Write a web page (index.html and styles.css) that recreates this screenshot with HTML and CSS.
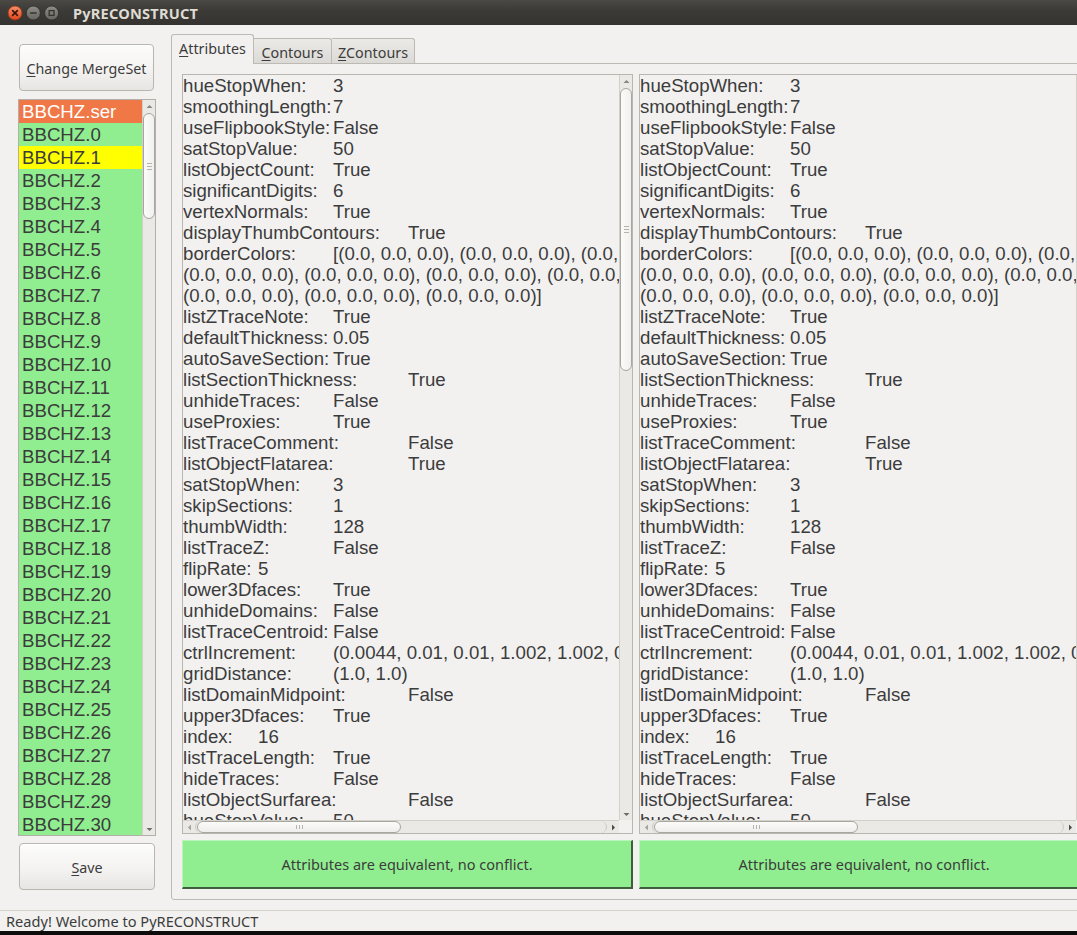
FILE: index.html
```html
<!DOCTYPE html>
<html>
<head>
<meta charset="utf-8">
<title>PyRECONSTRUCT</title>
<link rel="stylesheet" href="styles.css">
</head>
<body>
<div class="window">
  <div class="titlebar">
    <svg class="wbtns" width="64" height="25" viewBox="0 0 64 25">
      <defs>
        <linearGradient id="gc" x1="0" y1="0" x2="0" y2="1">
          <stop offset="0" stop-color="#f7906a"/>
          <stop offset="1" stop-color="#e0461c"/>
        </linearGradient>
        <linearGradient id="gg" x1="0" y1="0" x2="0" y2="1">
          <stop offset="0" stop-color="#8e8d88"/>
          <stop offset="1" stop-color="#67665f"/>
        </linearGradient>
      </defs>
      <circle cx="15" cy="13" r="7" fill="url(#gc)" stroke="#8f3516" stroke-width="0.8"/>
      <path d="M12.6 10.6 L17.4 15.4 M17.4 10.6 L12.6 15.4" stroke="#3a1509" stroke-width="1.6" stroke-linecap="round"/>
      <circle cx="33.3" cy="13" r="7" fill="url(#gg)" stroke="#2f2e2a" stroke-width="0.8"/>
      <path d="M30.6 13 H36" stroke="#35342f" stroke-width="1.6" stroke-linecap="round"/>
      <circle cx="51.6" cy="13" r="7" fill="url(#gg)" stroke="#2f2e2a" stroke-width="0.8"/>
      <rect x="49.2" y="10.6" width="4.8" height="4.8" fill="none" stroke="#35342f" stroke-width="1.3"/>
    </svg>
    <div class="title">PyRECONSTRUCT</div>
  </div>

  <div class="main">
    <div class="side">
      <div class="btn btn-top"><span><u>C</u>hange MergeSet</span></div>
      <div class="list">
        <div class="items">
          <div class="it sel">BBCHZ.ser</div>
          <div class="it g">BBCHZ.0</div>
          <div class="it y">BBCHZ.1</div>
          <div class="it g">BBCHZ.2</div>
          <div class="it g">BBCHZ.3</div>
          <div class="it g">BBCHZ.4</div>
          <div class="it g">BBCHZ.5</div>
          <div class="it g">BBCHZ.6</div>
          <div class="it g">BBCHZ.7</div>
          <div class="it g">BBCHZ.8</div>
          <div class="it g">BBCHZ.9</div>
          <div class="it g">BBCHZ.10</div>
          <div class="it g">BBCHZ.11</div>
          <div class="it g">BBCHZ.12</div>
          <div class="it g">BBCHZ.13</div>
          <div class="it g">BBCHZ.14</div>
          <div class="it g">BBCHZ.15</div>
          <div class="it g">BBCHZ.16</div>
          <div class="it g">BBCHZ.17</div>
          <div class="it g">BBCHZ.18</div>
          <div class="it g">BBCHZ.19</div>
          <div class="it g">BBCHZ.20</div>
          <div class="it g">BBCHZ.21</div>
          <div class="it g">BBCHZ.22</div>
          <div class="it g">BBCHZ.23</div>
          <div class="it g">BBCHZ.24</div>
          <div class="it g">BBCHZ.25</div>
          <div class="it g">BBCHZ.26</div>
          <div class="it g">BBCHZ.27</div>
          <div class="it g">BBCHZ.28</div>
          <div class="it g">BBCHZ.29</div>
          <div class="it g">BBCHZ.30</div>
        </div>
        <div class="vscroll">
          <div class="arr"><svg width="7" height="5" viewBox="0 0 7 5"><path d="M0.5 4 L3.5 1 L6.5 4 Z" fill="#8a8680"/></svg></div>
          <div class="track">
            <div class="vhandle list-handle"><span class="vgrip"></span></div>
          </div>
          <div class="arr"><svg width="7" height="5" viewBox="0 0 7 5"><path d="M0.5 1 L3.5 4 L6.5 1 Z" fill="#6e6a64"/></svg></div>
        </div>
      </div>
      <div class="btn btn-save"><span><u>S</u>ave</span></div>
    </div>

    <div class="tabwidget">
      <div class="tabs">
        <div class="tab t1 active"><span><u>A</u>ttributes</span></div>
        <div class="tab t2"><span><u>C</u>ontours</span></div>
        <div class="tab t3"><span><u>Z</u>Contours</span></div>
      </div>
      <div class="pane">
        <div class="col">
          <div class="tbox">
            <div class="content">
              <div class="r"><span class="k">hueStopWhen:</span>3</div>
              <div class="r"><span class="k">smoothingLength:</span>7</div>
              <div class="r"><span class="k">useFlipbookStyle:</span>False</div>
              <div class="r"><span class="k">satStopValue:</span>50</div>
              <div class="r"><span class="k">listObjectCount:</span>True</div>
              <div class="r"><span class="k">significantDigits:</span>6</div>
              <div class="r"><span class="k">vertexNormals:</span>True</div>
              <div class="r"><span class="k w">displayThumbContours:</span>True</div>
              <div class="r"><span class="k">borderColors:</span>[(0.0, 0.0, 0.0), (0.0, 0.0, 0.0), (0.0,</div>
              <div class="r">(0.0, 0.0, 0.0), (0.0, 0.0, 0.0), (0.0, 0.0, 0.0), (0.0, 0.0,</div>
              <div class="r">(0.0, 0.0, 0.0), (0.0, 0.0, 0.0), (0.0, 0.0, 0.0)]</div>
              <div class="r"><span class="k">listZTraceNote:</span>True</div>
              <div class="r"><span class="k">defaultThickness:</span>0.05</div>
              <div class="r"><span class="k">autoSaveSection:</span>True</div>
              <div class="r"><span class="k w">listSectionThickness:</span>True</div>
              <div class="r"><span class="k">unhideTraces:</span>False</div>
              <div class="r"><span class="k">useProxies:</span>True</div>
              <div class="r"><span class="k w">listTraceComment:</span>False</div>
              <div class="r"><span class="k w">listObjectFlatarea:</span>True</div>
              <div class="r"><span class="k">satStopWhen:</span>3</div>
              <div class="r"><span class="k">skipSections:</span>1</div>
              <div class="r"><span class="k">thumbWidth:</span>128</div>
              <div class="r"><span class="k">listTraceZ:</span>False</div>
              <div class="r"><span class="k n">flipRate:</span>5</div>
              <div class="r"><span class="k">lower3Dfaces:</span>True</div>
              <div class="r"><span class="k">unhideDomains:</span>False</div>
              <div class="r"><span class="k">listTraceCentroid:</span>False</div>
              <div class="r"><span class="k">ctrlIncrement:</span>(0.0044, 0.01, 0.01, 1.002, 1.002, 0</div>
              <div class="r"><span class="k">gridDistance:</span>(1.0, 1.0)</div>
              <div class="r"><span class="k w">listDomainMidpoint:</span>False</div>
              <div class="r"><span class="k">upper3Dfaces:</span>True</div>
              <div class="r"><span class="k n">index:</span>16</div>
              <div class="r"><span class="k">listTraceLength:</span>True</div>
              <div class="r"><span class="k">hideTraces:</span>False</div>
              <div class="r"><span class="k w">listObjectSurfarea:</span>False</div>
              <div class="r"><span class="k">hueStopValue:</span>50</div>
            </div>
            <div class="vscroll tv">
              <div class="arr"><svg width="7" height="5" viewBox="0 0 7 5"><path d="M0.5 4 L3.5 1 L6.5 4 Z" fill="#8a8680"/></svg></div>
              <div class="track">
                <div class="vhandle text-handle"><span class="vgrip"></span></div>
              </div>
              <div class="arr"><svg width="7" height="5" viewBox="0 0 7 5"><path d="M0.5 1 L3.5 4 L6.5 1 Z" fill="#6e6a64"/></svg></div>
            </div>
            <div class="hscroll">
              <div class="harr"><svg width="5" height="7" viewBox="0 0 5 7"><path d="M4 0.5 L1 3.5 L4 6.5 Z" fill="#a6a29c"/></svg></div>
              <div class="htrack">
                <div class="hhandle"><span class="hgrip"></span></div>
              </div>
              <div class="harr"><svg width="5" height="7" viewBox="0 0 5 7"><path d="M1 0.5 L4 3.5 L1 6.5 Z" fill="#4e4a44"/></svg></div>
            </div>
            <div class="corner"></div>
          </div>
          <div class="notice">Attributes are equivalent, no conflict.</div>
        </div>

        <div class="col">
          <div class="tbox">
            <div class="content">
              <div class="r"><span class="k">hueStopWhen:</span>3</div>
              <div class="r"><span class="k">smoothingLength:</span>7</div>
              <div class="r"><span class="k">useFlipbookStyle:</span>False</div>
              <div class="r"><span class="k">satStopValue:</span>50</div>
              <div class="r"><span class="k">listObjectCount:</span>True</div>
              <div class="r"><span class="k">significantDigits:</span>6</div>
              <div class="r"><span class="k">vertexNormals:</span>True</div>
              <div class="r"><span class="k w">displayThumbContours:</span>True</div>
              <div class="r"><span class="k">borderColors:</span>[(0.0, 0.0, 0.0), (0.0, 0.0, 0.0), (0.0,</div>
              <div class="r">(0.0, 0.0, 0.0), (0.0, 0.0, 0.0), (0.0, 0.0, 0.0), (0.0, 0.0,</div>
              <div class="r">(0.0, 0.0, 0.0), (0.0, 0.0, 0.0), (0.0, 0.0, 0.0)]</div>
              <div class="r"><span class="k">listZTraceNote:</span>True</div>
              <div class="r"><span class="k">defaultThickness:</span>0.05</div>
              <div class="r"><span class="k">autoSaveSection:</span>True</div>
              <div class="r"><span class="k w">listSectionThickness:</span>True</div>
              <div class="r"><span class="k">unhideTraces:</span>False</div>
              <div class="r"><span class="k">useProxies:</span>True</div>
              <div class="r"><span class="k w">listTraceComment:</span>False</div>
              <div class="r"><span class="k w">listObjectFlatarea:</span>True</div>
              <div class="r"><span class="k">satStopWhen:</span>3</div>
              <div class="r"><span class="k">skipSections:</span>1</div>
              <div class="r"><span class="k">thumbWidth:</span>128</div>
              <div class="r"><span class="k">listTraceZ:</span>False</div>
              <div class="r"><span class="k n">flipRate:</span>5</div>
              <div class="r"><span class="k">lower3Dfaces:</span>True</div>
              <div class="r"><span class="k">unhideDomains:</span>False</div>
              <div class="r"><span class="k">listTraceCentroid:</span>False</div>
              <div class="r"><span class="k">ctrlIncrement:</span>(0.0044, 0.01, 0.01, 1.002, 1.002, 0</div>
              <div class="r"><span class="k">gridDistance:</span>(1.0, 1.0)</div>
              <div class="r"><span class="k w">listDomainMidpoint:</span>False</div>
              <div class="r"><span class="k">upper3Dfaces:</span>True</div>
              <div class="r"><span class="k n">index:</span>16</div>
              <div class="r"><span class="k">listTraceLength:</span>True</div>
              <div class="r"><span class="k">hideTraces:</span>False</div>
              <div class="r"><span class="k w">listObjectSurfarea:</span>False</div>
              <div class="r"><span class="k">hueStopValue:</span>50</div>
            </div>
            <div class="vscroll tv">
              <div class="arr"><svg width="7" height="5" viewBox="0 0 7 5"><path d="M0.5 4 L3.5 1 L6.5 4 Z" fill="#8a8680"/></svg></div>
              <div class="track">
                <div class="vhandle text-handle"><span class="vgrip"></span></div>
              </div>
              <div class="arr"><svg width="7" height="5" viewBox="0 0 7 5"><path d="M0.5 1 L3.5 4 L6.5 1 Z" fill="#6e6a64"/></svg></div>
            </div>
            <div class="hscroll">
              <div class="harr"><svg width="5" height="7" viewBox="0 0 5 7"><path d="M4 0.5 L1 3.5 L4 6.5 Z" fill="#a6a29c"/></svg></div>
              <div class="htrack">
                <div class="hhandle"><span class="hgrip"></span></div>
              </div>
              <div class="harr"><svg width="5" height="7" viewBox="0 0 5 7"><path d="M1 0.5 L4 3.5 L1 6.5 Z" fill="#4e4a44"/></svg></div>
            </div>
            <div class="corner"></div>
          </div>
          <div class="notice">Attributes are equivalent, no conflict.</div>
        </div>
      </div>
    </div>
  </div>

  <div class="status">Ready! Welcome to PyRECONSTRUCT</div>
  <div class="bottomstrip"></div>
</div>
</body>
</html>
```

FILE: styles.css
```css
html, body {
  margin: 0;
  padding: 0;
  width: 1077px;
  height: 935px;
  overflow: hidden;
  background: #f2f1f0;
}

.window {
  width: 1077px;
  height: 935px;
  display: flex;
  flex-direction: column;
  overflow: hidden;
  font-family: "Noto Sans", "DejaVu Sans", sans-serif;
  color: #3c3c3c;
}

/* ---------- title bar ---------- */
.titlebar {
  height: 25px;
  flex: 0 0 25px;
  display: flex;
  align-items: center;
  background: linear-gradient(#4a4944, #3c3b37 40%, #34332f);
}
.wbtns {
  display: block;
  flex: 0 0 64px;
}
.title {
  margin-left: 9px;
  font-family: "Noto Sans", "DejaVu Sans", sans-serif;
  font-weight: bold;
  font-size: 14.6px;
  color: #dfdbd2;
  letter-spacing: 0.2px;
  padding-top: 1px;
}

/* ---------- main ---------- */
.main {
  height: 885px;
  flex: 0 0 885px;
  display: flex;
  align-items: flex-start;
}

.side {
  width: 136px;
  margin-left: 19px;
  padding-top: 19px;
  display: flex;
  flex-direction: column;
}

.btn {
  box-sizing: border-box;
  height: 47px;
  border: 1px solid #b9b5af;
  border-radius: 4px;
  background: linear-gradient(#fcfcfb, #f4f3f2 55%, #e7e5e2);
  box-shadow: inset 0 1px 0 #ffffff;
  display: flex;
  align-items: center;
  justify-content: center;
  font-size: 14.3px;
  color: #3c3c3c;
}
.btn span { padding-top: 1px; }
.btn-top { width: 135px; }
.btn-save { width: 136px; margin-top: 7px; }

u { text-decoration: underline; text-underline-offset: 2px; }

/* list */
.list {
  box-sizing: border-box;
  margin-top: 8px;
  width: 138px;
  margin-left: -1px;
  height: 737px;
  border: 1px solid #b3afa9;
  display: flex;
  background: #ffffff;
}
.items {
  flex: 1;
  overflow: hidden;
}
.it {
  height: 23px;
  line-height: 23px;
  padding-left: 3px;
  font-family: "Liberation Sans", Arial, sans-serif;
  font-size: 18.67px;
  color: #3c3c3c;
  white-space: nowrap;
}
.it.sel { background: #f07746; color: #ffffff; }
.it.g { background: #90ee90; }
.it.y { background: #ffff00; }

/* scrollbars */
.vscroll {
  width: 13px;
  flex: 0 0 13px;
  box-sizing: border-box;
  background: #ebe9e6;
  border-left: 1px solid #d3cfc9;
  display: flex;
  flex-direction: column;
}
.arr {
  height: 12px;
  flex: 0 0 12px;
  display: flex;
  align-items: center;
  justify-content: center;
}
.arr svg { display: block; }
.track {
  flex: 1;
  display: flex;
  flex-direction: column;
  padding-top: 1px;
}
.vhandle {
  box-sizing: border-box;
  width: 12px;
  border: 1px solid #a9a59f;
  border-radius: 6px;
  background: linear-gradient(90deg, #fbfbfa, #f1f0ee);
  display: flex;
  align-items: center;
  justify-content: center;
}
.list-handle { height: 106px; }
.text-handle { height: 283px; }
.vgrip {
  width: 5px;
  height: 5px;
  border-top: 1px solid #b6b2ac;
  border-bottom: 1px solid #b6b2ac;
  position: relative;
}
.vgrip::after {
  content: "";
  position: absolute;
  left: 0;
  right: 0;
  top: 2px;
  border-top: 1px solid #b6b2ac;
}

/* ---------- tabs ---------- */
.tabwidget {
  margin-left: 16px;
  margin-top: 9px;
  display: flex;
  flex-direction: column;
}
.tabs {
  display: flex;
  align-items: flex-end;
  height: 29px;
  position: relative;
  z-index: 2;
}
.tab {
  box-sizing: border-box;
  height: 25px;
  border: 1px solid #bdb9b3;
  border-left: none;
  border-bottom: none;
  background: linear-gradient(#ebeae7, #dcdad6);
  display: flex;
  align-items: center;
  justify-content: center;
  font-size: 14.3px;
  color: #3c3c3c;
  border-radius: 0 3px 0 0;
}
.tab.active {
  height: 30px;
  margin-bottom: -1px;
  border-left: 1px solid #bdb9b3;
  border-radius: 3px 3px 0 0;
  background: #f2f1f0;
  padding-bottom: 3px;
}
.tab span { padding-top: 2px; }
.tab.active span { padding-top: 0; }
.t1 { width: 83px; }
.t2 { width: 78px; }
.t3 { width: 83px; }

.pane {
  box-sizing: border-box;
  width: 930px;
  height: 837px;
  border: 1px solid #bdb9b3;
  border-radius: 0 3px 3px 3px;
  padding: 10px;
  display: flex;
  gap: 6px;
  background: #f2f1f0;
}
.col {
  width: 451px;
  flex: 0 0 451px;
  display: flex;
  flex-direction: column;
  gap: 6px;
}

.tbox {
  box-sizing: border-box;
  height: 760px;
  border: 1px solid #b9b5af;
  display: grid;
  grid-template-columns: 436px 13px;
  grid-template-rows: 745px 13px;
  background: #f2f1f0;
}
.content {
  overflow: hidden;
  font-family: "Liberation Sans", Arial, sans-serif;
  font-size: 18.67px;
  line-height: 21px;
  color: #3c3c3c;
  white-space: nowrap;
}
.r { height: 21px; }
.k {
  display: inline-block;
  width: 150px;
}
.k.w { width: 225px; }
.k.n { width: 75px; }

.tv { height: 745px; }

.hscroll {
  box-sizing: border-box;
  height: 13px;
  background: #ebe9e6;
  border-top: 1px solid #d3cfc9;
  display: flex;
  align-items: stretch;
}
.harr {
  width: 12px;
  flex: 0 0 12px;
  display: flex;
  align-items: center;
  justify-content: center;
}
.harr svg { display: block; }
.htrack {
  flex: 1;
  display: flex;
  align-items: stretch;
  padding-left: 1px;
  border: 1px solid #cdc9c3;
  border-top: none;
  border-bottom: none;
  border-radius: 6px;
}
.hhandle {
  box-sizing: border-box;
  width: 204px;
  height: 12px;
  border: 1px solid #a9a59f;
  border-radius: 6px;
  background: linear-gradient(#fbfbfa, #efeeec);
  display: flex;
  align-items: center;
  justify-content: center;
}
.hgrip {
  width: 5px;
  height: 4px;
  border-left: 1px solid #b6b2ac;
  border-right: 1px solid #b6b2ac;
  position: relative;
}
.hgrip::after {
  content: "";
  position: absolute;
  top: 0;
  bottom: 0;
  left: 2px;
  border-left: 1px solid #b6b2ac;
}
.corner { background: #f2f1f0; }

.notice {
  box-sizing: border-box;
  height: 49px;
  background: #90ee90;
  border-top: 1px solid #b9f5b9;
  border-left: 1px solid #b9f5b9;
  border-right: 2px solid #3e5e3e;
  border-bottom: 2px solid #3e5e3e;
  display: flex;
  align-items: center;
  justify-content: center;
  font-size: 14.5px;
  color: #3c3c3c;
}

/* ---------- status ---------- */
.status {
  box-sizing: border-box;
  height: 21px;
  flex: 0 0 21px;
  border-top: 1px solid #d5d1cb;
  padding-left: 6px;
  font-size: 14.6px;
  line-height: 20px;
  color: #3c3c3c;
}
.bottomstrip {
  height: 4px;
  flex: 0 0 4px;
  background: #0c0c0c;
}
```
